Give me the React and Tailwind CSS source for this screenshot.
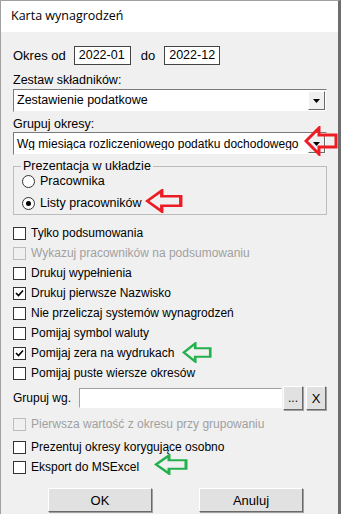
import React from 'react';

const font = { fontFamily: '"Liberation Sans", Arial, sans-serif' };

const Arrow = ({ className, color }) => (
  <svg className={`absolute ${className}`} viewBox="0 0 34 30" fill="none" preserveAspectRatio="none">
    <path d="M2 15 L15 2 L15 9 L32 9 L32 21 L15 21 L15 28 Z" stroke={color} strokeWidth="3" strokeLinejoin="miter" />
  </svg>
);

const Check = ({ label, checked, disabled }) => (
  <div className="flex items-center h-5 whitespace-nowrap">
    <span
      className={`w-[13px] h-[13px] shrink-0 border flex items-center justify-center ${
        disabled ? 'border-[#bcbcbc] bg-[#f0f0f0]' : 'border-[#333] bg-white'
      }`}
    >
      {checked && (
        <svg width="9" height="9" viewBox="0 0 9 9">
          <path d="M1 4 L3.5 6.5 L8 1.5" stroke="#000" strokeWidth="1.6" fill="none" />
        </svg>
      )}
    </span>
    <span className={`ml-[5px] ${disabled ? 'text-[#a0a0a0]' : 'text-black'}`}>{label}</span>
  </div>
);

const Radio = ({ label, checked }) => (
  <div className="flex items-center h-[22px] whitespace-nowrap">
    <span className="w-[13px] h-[13px] rounded-full border border-[#333] bg-white flex items-center justify-center">
      {checked && <span className="w-[5px] h-[5px] rounded-full bg-black" />}
    </span>
    <span className="ml-[5px]">{label}</span>
  </div>
);

const Select = ({ value }) => (
  <div className="flex h-[23px] bg-white border border-[#7a7a7a] border-r-[#f0f0f0] border-b-[#f0f0f0] items-center">
    <span className="flex-1 pl-[3px] whitespace-nowrap overflow-hidden">{value}</span>
    <span className="w-[17px] h-[19px] mr-px shrink-0 bg-[#f0f0f0] border border-white border-r-[#696969] border-b-[#696969] flex items-center justify-center">
      <svg width="7" height="4" viewBox="0 0 7 4"><path d="M0 0 H7 L3.5 4 Z" fill="#000" /></svg>
    </span>
  </div>
);

const Btn = ({ children, className }) => (
  <div className={`h-[24px] shrink-0 bg-[#e1e1e1] border border-white border-r-[#696969] border-b-[#696969] shadow-[1px_1px_0_#a0a0a0] flex items-center justify-center ${className}`}>
    {children}
  </div>
);

export default function App() {
  return (
    <div className="relative w-[341px] h-[514px] overflow-hidden bg-[#f0f0f0] text-[12px] text-black leading-none" style={font}>
      <div className="h-full border-l border-t border-[#a0a0a0] border-r-[3px] border-r-[#6d6d6d]">
        {/* title bar */}
        <div className="h-[31px] bg-white flex items-center pl-[10px] text-[12.5px]" style={{ fontFamily: '"Open Sans", "Noto Sans", sans-serif' }}>
          Karta wynagrodzeń
        </div>

        <div className="pl-[12px] pr-[11px]">
          {/* okres */}
          <div className="flex items-center mt-[14px] h-[19px] whitespace-nowrap">
            <span className="text-[13px]">Okres od</span>
            <span className="ml-[8px] w-[57px] h-[19px] border border-[#444] bg-white flex items-center pl-[4px] text-[12.5px]">2022-01</span>
            <span className="ml-[10px] text-[13px]">do</span>
            <span className="ml-[9px] w-[56px] h-[19px] border border-[#444] bg-white flex items-center pl-[4px] text-[12.5px]">2022-12</span>
          </div>

          <div className="mt-[8px] h-[15px] flex items-center text-[12.5px]">Zestaw składników:</div>
          <div className="mt-px text-[12.5px]">
            <Select value="Zestawienie podatkowe" />
          </div>

          <div className="mt-[5px] h-[14px] flex items-center text-[12.5px]">Grupuj okresy:</div>
          <div className="mt-px">
            <Select value="Wg miesiąca rozliczeniowego podatku dochodowego" />
          </div>

          {/* group box */}
          <fieldset className="mt-[5px] border border-[#bcbcbc] pl-[8px] pb-[4px] h-[55px] text-[12.5px]">
            <legend className="px-[2px] -ml-[1px]">Prezentacja w układzie</legend>
            <div className="-mt-[2px]">
              <Radio label="Pracownika" />
              <Radio label="Listy pracowników" checked />
            </div>
          </fieldset>

          <div className="mt-[8px] flex flex-col">
            <Check label="Tylko podsumowania" />
            <Check label="Wykazuj pracowników na podsumowaniu" disabled />
            <Check label="Drukuj wypełnienia" />
            <Check label="Drukuj pierwsze Nazwisko" checked />
            <Check label="Nie przeliczaj systemów wynagrodzeń" />
            <Check label="Pomijaj symbol waluty" />
            <Check label="Pomijaj zera na wydrukach" checked />
            <Check label="Pomijaj puste wiersze okresów" />
          </div>

          <div className="mt-[5px] flex items-center h-[20px] whitespace-nowrap">
            <span className="w-[66px] shrink-0">Grupuj wg.</span>
            <span className="w-[203px] h-[20px] shrink-0 bg-white border border-[#a0a0a0] border-r-white border-b-white" />
            <Btn className="ml-[1px] w-[20px] h-[20px]">...</Btn>
            <Btn className="ml-[3px] w-[20px] h-[20px] text-[13px]">X</Btn>
          </div>

          <div className="mt-[6px] flex flex-col">
            <Check label="Pierwsza wartość z okresu przy grupowaniu" disabled />
          </div>
          <div className="mt-[3px] flex flex-col">
            <Check label="Prezentuj okresy korygujące osobno" />
            <Check label="Eksport do MSExcel" />
          </div>

          <div className="mt-[11px] flex">
            <Btn className="ml-[35px] w-[104px] text-[13px]">OK</Btn>
            <Btn className="ml-[47px] w-[104px] text-[13px]">Anuluj</Btn>
          </div>
        </div>
      </div>

      {/* annotations */}
      <Arrow className="left-[304px] top-[126px] w-[34px] h-[30px]" color="#ec1c24" />
      <Arrow className="left-[145px] top-[189px] w-[38px] h-[24px]" color="#ec1c24" />
      <Arrow className="left-[182px] top-[342px] w-[30px] h-[21px]" color="#22b14c" />
      <Arrow className="left-[154px] top-[454px] w-[34px] h-[21px]" color="#22b14c" />
    </div>
  );
}
